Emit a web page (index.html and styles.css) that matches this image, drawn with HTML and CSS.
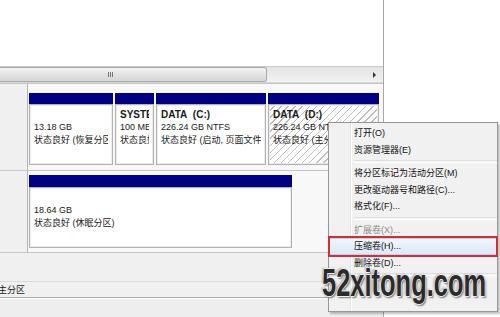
FILE: index.html
```html
<!DOCTYPE html>
<html lang="zh-CN">

<head>
    <meta charset="UTF-8">
    <title>磁盘管理</title>
    <link rel="stylesheet" href="styles.css">
</head>

<body>
    <div class="window">
        <div class="main">
            <div class="volume-list"></div>

            <div class="hscroll">
                <div class="thumb"><span class="grip"></span></div>
                <span class="arrow-right"></span>
            </div>

            <div class="disk-area">
                <!-- disk 0 -->
                <div class="disk disk-first">
                    <div class="disk-label"></div>
                    <div class="parts">
                        <div class="part w-recovery">
                            <div class="bar"></div>
                            <div class="body">
                                <div class="line name"></div>
                                <div class="line">13.18 GB</div>
                                <div class="line">状态良好 (恢复分区)</div>
                            </div>
                        </div>
                        <div class="part w-system">
                            <div class="bar"></div>
                            <div class="body">
                                <div class="line name">SYSTEM</div>
                                <div class="line">100 MB NTFS</div>
                                <div class="line">状态良好 (系统)</div>
                            </div>
                        </div>
                        <div class="part w-data-c">
                            <div class="bar"></div>
                            <div class="body">
                                <div class="line name">DATA&nbsp; (C:)</div>
                                <div class="line">226.24 GB NTFS</div>
                                <div class="line">状态良好 (启动, 页面文件</div>
                            </div>
                        </div>
                        <div class="part w-data-d">
                            <div class="bar"></div>
                            <div class="body selected">
                                <div class="line name">DATA&nbsp; (D:)</div>
                                <div class="line">226.24 GB NTFS</div>
                                <div class="line">状态良好 (主分区)</div>
                            </div>
                        </div>
                    </div>
                </div>

                <!-- disk 1 -->
                <div class="disk disk-second">
                    <div class="disk-label"></div>
                    <div class="parts">
                        <div class="part w-hibernate">
                            <div class="bar"></div>
                            <div class="body">
                                <div class="line name"></div>
                                <div class="line">18.64 GB</div>
                                <div class="line">状态良好 (休眠分区)</div>
                            </div>
                        </div>
                    </div>
                </div>
            </div>

            <div class="legend"><span class="legend-text">主分区</span></div>
            <div class="footer"></div>
        </div>
        <div class="side"></div>

        <!-- context menu -->
        <div class="menu">
            <div class="item">打开(O)</div>
            <div class="item">资源管理器(E)</div>
            <div class="sep"></div>
            <div class="item">将分区标记为活动分区(M)</div>
            <div class="item">更改驱动器号和路径(C)...</div>
            <div class="item">格式化(F)...</div>
            <div class="sep"></div>
            <div class="item disabled">扩展卷(X)...</div>
            <div class="item hover marked">压缩卷(H)...</div>
            <div class="item">删除卷(D)...</div>
            <div class="sep"></div>
        </div>

        <div class="watermark">52xitong.com</div>
    </div>
</body>

</html>
```

FILE: styles.css
```css
body {
    margin: 0;
    padding: 0;
    background-color: #fff;
    font-family: "Liberation Sans", "Noto Sans CJK SC", sans-serif;
    font-size: 9px;
    color: #1a1a1a;
}

.window {
    position: relative;
    width: 500px;
    height: 317px;
    overflow: hidden;
    display: flex;
}

.main {
    width: 383px;
    border-right: 1px solid #a8a8a8;
    display: flex;
    flex-direction: column;
}

.side {
    flex: 1;
    background-color: #fff;
}

.volume-list {
    height: 66px;
    background-color: #fff;
}

/* horizontal scrollbar */
.hscroll {
    height: 15px;
    border-top: 1px solid #c9c9c9;
    border-bottom: 1px solid #d6d6d6;
    background: linear-gradient(#e4e4e4, #f1f1f1);
    display: flex;
    align-items: center;
}

.thumb {
    width: 266px;
    height: 13px;
    border: 1px solid #a9a9a9;
    border-left: none;
    border-radius: 0 3px 3px 0;
    background: linear-gradient(#f4f4f4, #e3e3e3 50%, #d6d6d6);
    display: flex;
    align-items: center;
}

.grip {
    width: 5px;
    height: 5px;
    margin-left: 108px;
    background: repeating-linear-gradient(90deg, #777 0 1px, transparent 1px 2px);
}

.arrow-right {
    margin-left: auto;
    margin-right: 7px;
    width: 0;
    height: 0;
    border-top: 3px solid transparent;
    border-bottom: 3px solid transparent;
    border-left: 3px solid #333;
}

/* disks */
.disk-area {
    flex: 1;
    background-color: #f0f0f0;
}

.disk {
    display: flex;
    background-color: #f8f8f8;
    border-bottom: 1px solid #c6c6c6;
}

.disk-first {
    border-top: 1px solid #c6c6c6;
}

.disk-label {
    width: 27px;
    background-color: #f0f0f0;
    border-right: 1px solid #b4b4b4;
}

.parts {
    display: flex;
    gap: 2px;
    padding-left: 1px;
}

.disk-first .parts {
    padding-top: 9px;
    padding-bottom: 5px;
}

.disk-second .parts {
    padding-top: 4px;
    padding-bottom: 4px;
}

.part {
    display: flex;
    flex-direction: column;
}

.w-recovery { width: 84px; }
.w-system { width: 39px; }
.w-data-c { width: 110px; }
.w-data-d { width: 111px; }
.w-hibernate { width: 263px; }

.bar {
    height: 11px;
    background-color: #000080;
}

.disk-second .bar {
    height: 12px;
}

.body {
    height: 61px;
    box-sizing: border-box;
    padding: 3px 4px;
    background-color: #fff;
    border: 1px solid #b2b2b2;
    box-shadow: inset 0 0 0 1px #ececec;
    overflow: hidden;
}

.body.selected {
    background: repeating-linear-gradient(135deg, #fff 0 4px, #bdbdbd 4px 5px);
}

.line {
    height: 13px;
    line-height: 13px;
    white-space: nowrap;
    overflow: hidden;
}

.name {
    font-weight: bold;
    font-size: 10px;
}

/* legend */
.legend {
    height: 15px;
    border-top: 1px solid #dcdcdc;
    border-bottom: 1px solid #a9a9a9;
    background-color: #f0f0f0;
    display: flex;
    align-items: center;
}

.legend-text {
    margin-left: -2px;
}

.footer {
    height: 18px;
    border-top: 1px solid #fff;
    background-color: #eeeeee;
}

/* context menu */
.menu {
    position: absolute;
    left: 328px;
    top: 122px;
    width: 168px;
    height: 186px;
    padding-top: 2px;
    border: 1px solid #979797;
    background: linear-gradient(90deg, #f1f1f1 0 21px, #e2e3e3 21px 22px, #fff 22px 23px, #f1f1f1 23px);
    box-shadow: 2px 2px 2px rgba(0, 0, 0, 0.25);
}

.item {
    position: relative;
    height: 16.5px;
    line-height: 16.5px;
    padding-left: 25px;
    white-space: nowrap;
    color: #111;
}

.item.disabled {
    color: #8d8d8d;
}

.item.hover {
    background: linear-gradient(#f1f6fc, #dce8f6);
    box-shadow: inset 0 0 0 1px #b9d3f3;
    border-radius: 2px;
}

/* red annotation box */
.item.marked::after {
    content: "";
    position: absolute;
    left: -1px;
    right: -1px;
    top: -2px;
    bottom: -2px;
    border: 2px solid #cf3038;
}

.sep {
    height: 1px;
    margin: 2px 0 2px 25px;
    border-top: 1px solid #e0e0e0;
    border-bottom: 1px solid #fff;
}

/* watermark */
.watermark {
    position: absolute;
    left: 322px;
    top: 264px;
    font-size: 38px;
    line-height: 38px;
    font-weight: bold;
    color: #2b2b2b;
    white-space: nowrap;
    transform: scaleX(0.67);
    transform-origin: left top;
    text-shadow: 1px 0 0 #eee, -1px 0 0 #eee, 0 1px 0 #eee, 0 -1px 0 #eee,
        2px 2px 2px #777, -2px -1px 2px #aaa;
}
```
